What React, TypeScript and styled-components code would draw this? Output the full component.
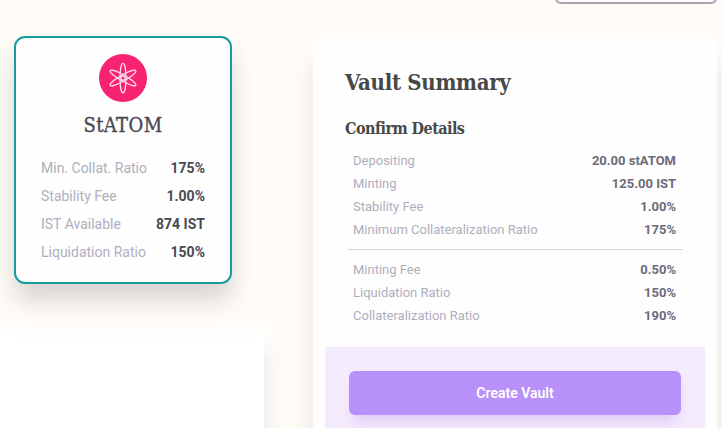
import React from "react";
import styled, { createGlobalStyle } from "styled-components";

const GlobalStyle = createGlobalStyle`
  * { box-sizing: border-box; }
  html, body { margin: 0; overflow: hidden; }
  body { font-family: Roboto, "Liberation Sans", sans-serif; }
`;

const slab = `"Roboto Slab", "DejaVu Serif Condensed", "DejaVu Serif", serif`;

const Page = styled.div`
  width: 722px;
  height: 428px;
  overflow: hidden;
  background: #fffcf8;
`;

const Header = styled.header`
  display: flex;
  justify-content: flex-end;
  height: 36px;
  padding-right: 5px;
`;

const WalletButton = styled.button`
  width: 162px;
  height: 36px;
  margin-top: -32px;
  border: 2px solid #a5a4b0;
  border-radius: 6px;
  background: #fffefc;
`;

const Columns = styled.main`
  display: flex;
  align-items: flex-start;
  gap: 49px;
`;

const Collateral = styled.section`
  width: 264px;
  flex: none;
`;

const Card = styled.article`
  width: 218px;
  height: 248px;
  margin-left: 14px;
  padding: 16px 25px;
  border: 2px solid #1a9c9c;
  border-radius: 11px;
  background: #fefefe;
  box-shadow: 0 20px 24px -2px rgba(70, 60, 60, 0.15), 0 10px 24px rgba(70, 60, 60, 0.07);
`;

const TokenIcon = styled.svg`
  display: block;
  width: 48px;
  height: 48px;
  margin: 0 auto;
`;

const TokenName = styled.h3`
  margin: 9px 0 15px;
  font: 500 20px/28px ${slab};
  letter-spacing: 0.4px;
  text-align: center;
  color: #484850;
  -webkit-text-stroke: 0.35px #484850;
`;

const Details = styled.dl<{ $summary?: boolean }>`
  margin: 0;
  padding: ${(p) => (p.$summary ? "0 7px 0 8px" : "0")};
  font-size: ${(p) => (p.$summary ? "13px" : "14px")};
  line-height: ${(p) => (p.$summary ? "23px" : "28px")};
  color: ${(p) => (p.$summary ? "#6c6b7b" : "#4a4a50")};
`;

const Row = styled.div`
  display: flex;
  justify-content: space-between;
  white-space: nowrap;
`;

const Label = styled.dt`
  color: #b0aebd;
`;

const Value = styled.dd`
  margin: 0;
  font-weight: 700;
`;

const NextPanel = styled.div`
  height: 130px;
  margin-top: 53px;
  background: #fff;
  box-shadow: 4px 16px 18px rgba(70, 60, 60, 0.1), 0 -6px 12px 4px #fffefd;
`;

const Summary = styled.section`
  flex: none;
  width: 404px;
  height: 450px;
  margin-top: 1px;
  padding: 29px 12px 0;
  border-radius: 6px;
  background: #fefefe;
  box-shadow: 0 26px 22px rgba(70, 60, 60, 0.13);
`;

const SummaryBody = styled.div`
  height: 281px;
  padding: 0 22px 0 20px;
`;

const Title = styled.h1`
  margin: 0;
  font: 600 22px/32px ${slab};
  letter-spacing: -0.3px;
  color: #484848;
`;

const Subtitle = styled.h2`
  margin: 19px 0 8px;
  font: 600 16px/24px ${slab};
  letter-spacing: -0.55px;
  color: #484848;
`;

const Divider = styled.hr`
  height: 1px;
  margin: 8px 0 8px 3px;
  border: 0;
  background: #d5d5de;
`;

const Footer = styled.footer`
  height: 140px;
  width: 380px;
  padding: 24px;
  background: #f4ecfd;
`;

const CreateButton = styled.button`
  display: block;
  width: 332px;
  height: 44px;
  padding: 0;
  border: 0;
  border-radius: 6px;
  background: #b890f9;
  color: #fff;
  font: 600 14px/44px Roboto, sans-serif;
  box-shadow: 0 10px 14px -4px rgba(174, 110, 225, 0.28);
`;

const terms = [
  ["Min. Collat. Ratio", "175%"],
  ["Stability Fee", "1.00%"],
  ["IST Available", "874 IST"],
  ["Liquidation Ratio", "150%"],
];
const confirmation = [
  ["Depositing", "20.00 stATOM"],
  ["Minting", "125.00 IST"],
  ["Stability Fee", "1.00%"],
  ["Minimum Collateralization Ratio", "175%"],
];
const fees = [
  ["Minting Fee", "0.50%"],
  ["Liquidation Ratio", "150%"],
  ["Collateralization Ratio", "190%"],
];

function DetailList({ rows, summary }: { rows: string[][]; summary?: boolean }) {
  return (
    <Details $summary={summary}>
      {rows.map(([label, value]) => (
        <Row key={label}>
          <Label>{label}</Label>
          <Value>{value}</Value>
        </Row>
      ))}
    </Details>
  );
}

function AtomIcon() {
  return (
    <TokenIcon viewBox="0 0 48 48">
      <circle cx="24" cy="24" r="24" fill="#f82272" />
      <g fill="none" stroke="#ffe3ef" strokeWidth="1.15">
        {[0, 60, -60].map((angle) => (
          <ellipse key={angle} cx="24" cy="24" rx="3" ry="14.8" transform={`rotate(${angle} 24 24)`} />
        ))}
        <circle cx="24" cy="24" r="2.1" />
      </g>
    </TokenIcon>
  );
}

export default function App() {
  return (
    <Page>
      <GlobalStyle />
      <Header>
        <WalletButton aria-label="Wallet" />
      </Header>
      <Columns>
        <Collateral>
          <Card>
            <AtomIcon />
            <TokenName>StATOM</TokenName>
            <DetailList rows={terms} />
          </Card>
          <NextPanel />
        </Collateral>
        <Summary>
          <SummaryBody>
            <Title>Vault Summary</Title>
            <Subtitle>Confirm Details</Subtitle>
            <DetailList rows={confirmation} summary />
            <Divider />
            <DetailList rows={fees} summary />
          </SummaryBody>
          <Footer>
            <CreateButton>Create Vault</CreateButton>
          </Footer>
        </Summary>
      </Columns>
    </Page>
  );
}
